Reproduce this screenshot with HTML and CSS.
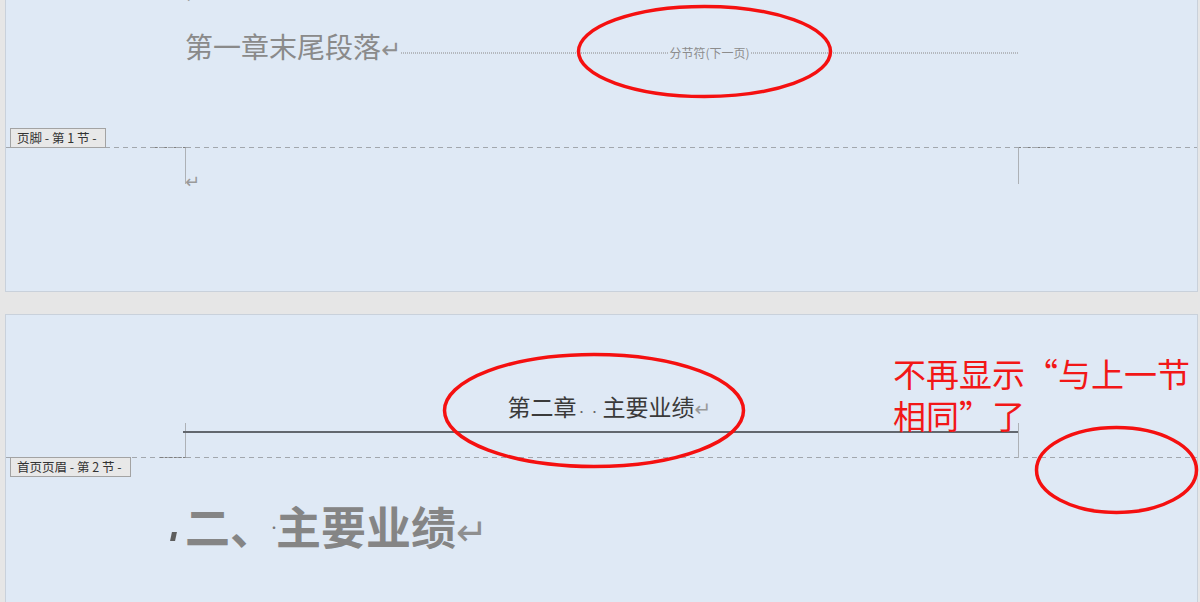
FILE: index.html
```html
<!DOCTYPE html>
<html lang="zh-CN">
<head>
<meta charset="utf-8">
<title>分节符 页眉页脚</title>
<link rel="stylesheet" href="styles.css">
</head>
<body>
<div class="canvas">
  <section class="page page-1">
    <div class="body-zone">
      <div class="prev-mark"><span>↵</span></div>
      <div class="para-row">
        <span class="p1-text">第一章末尾段落<span class="pm">↵</span></span>
        <div class="sbreak">
          <span class="dots"></span>
          <span class="sb-label">分节符(下一页)</span>
          <span class="dots"></span>
        </div>
      </div>
      <div class="hf-tab tab-foot">页脚 - 第 1 节 -</div>
    </div>
    <div class="foot-row">
      <div class="crop crop-l"></div>
      <div class="foot-content"><span class="pm foot-pm">↵</span></div>
      <div class="crop crop-r"></div>
    </div>
  </section>

  <section class="page page-2">
    <div class="head-zone">
      <div class="head-row">
        <div class="crop2 crop2-l"></div>
        <div class="head-para">第二章<span class="sp">·</span><span class="sp">·</span>主要业绩<span class="pm tail">↵</span></div>
        <div class="crop2 crop2-r"></div>
      </div>
      <div class="hf-tab tab-head">首页页眉 - 第 2 节 -</div>
    </div>
    <h1 class="heading"><span class="kwn"></span>二<span class="dun">、</span><span class="spdot">·</span>主要业绩<span class="pm hpm">↵</span></h1>
  </section>

  <div class="note">不再显示“与上一节<br>相同”了</div>

  <svg class="marks" width="1200" height="602" viewBox="0 0 1200 602">
    <ellipse cx="704.5" cy="51.5" rx="126" ry="45"/>
    <ellipse cx="594" cy="410.5" rx="149.5" ry="56"/>
    <ellipse cx="1116.5" cy="470" rx="80" ry="42.5"/>
  </svg>
</div>
</body>
</html>
```

FILE: styles.css
```css
html, body {
  margin: 0;
  padding: 0;
}
body {
  background: #e6e6e6;
  font-family: "Noto Sans CJK SC", "Noto Sans", sans-serif;
  overflow: hidden;
}
.canvas {
  position: relative;
  width: 1200px;
  height: 602px;
  overflow: hidden;
}

/* pages */
.page {
  margin-left: 5px;
  width: 1191px;
  background: #dfe9f5;
  border: 1px solid #c9d1db;
}
.page-1 {
  border-top: none;
  height: 291px;
}
.page-2 {
  margin-top: 22px;
  height: 300px;
}

/* page 1 body */
.body-zone {
  position: relative;
  height: 147px;
  padding-bottom: 1px;
  background: repeating-linear-gradient(90deg, #a2a7ad 0 5px, transparent 5px 9px) left bottom / 100% 1px no-repeat;
}
.prev-mark {
  height: 4px;
  overflow: hidden;
  padding-left: 179px;
}
.prev-mark span {
  display: block;
  font-family: "DejaVu Sans", sans-serif;
  font-size: 16px;
  line-height: 14px;
  margin-top: -9px;
  color: #9a9a9a;
}
.para-row {
  display: flex;
  align-items: center;
  width: 833px;
  margin-top: 24px;
  padding-left: 179px;
}
.p1-text {
  font-size: 28px;
  line-height: 36px;
  color: #8a8a8a;
  white-space: nowrap;
}
.pm {
  font-family: "DejaVu Sans", sans-serif;
  font-weight: 400;
}
.p1-text .pm {
  font-size: 24px;
  color: #8f8f8f;
}
.sbreak {
  flex: 1;
  display: flex;
  align-items: center;
  margin-top: 10px;
}
.dots {
  flex: 1;
  height: 2px;
  background: repeating-linear-gradient(90deg, #b4b8be 0 1px, transparent 1px 2px);
}
.sb-label {
  font-size: 12px;
  line-height: 14px;
  color: #8c8c8c;
  padding: 0 1px;
  white-space: nowrap;
}

/* header/footer tabs */
.hf-tab {
  position: absolute;
  left: 4px;
  font-size: 12.5px;
  line-height: 18px;
  padding: 0 8px 0 6px;
  background: #e8e8e8;
  border: 1px solid #a3a3a3;
  color: #333;
  white-space: nowrap;
}
.tab-foot {
  bottom: 0;
}
.tab-head {
  top: 100%;
  margin-top: -1px;
}

/* page 1 footer */
.foot-row {
  display: flex;
  margin-top: -1px;
  padding-left: 144px;
}
.crop {
  height: 36px;
  border-top: 1px dashed #808080;
}
.crop-l {
  width: 35px;
  border-right: 1px solid #adb1b6;
}
.crop-r {
  width: 36px;
  border-left: 1px solid #adb1b6;
}
.foot-content {
  width: 832px;
}
.foot-pm {
  display: block;
  margin-left: -1px;
  padding-top: 26px;
  font-size: 18px;
  line-height: 18px;
  color: #9a9a9a;
}

/* page 2 header */
.head-zone {
  position: relative;
  height: 142px;
  padding-bottom: 1px;
  display: flex;
  flex-direction: column;
  justify-content: flex-end;
  background: repeating-linear-gradient(90deg, #a2a7ad 0 5px, transparent 5px 9px) left bottom / 100% 1px no-repeat;
}
.head-row {
  display: flex;
  align-items: flex-end;
  padding-left: 154px;
  margin-bottom: -1px;
}
.crop2 {
  height: 34px;
}
.crop2-l {
  width: 25px;
  border-right: 1px solid #adb1b6;
  border-bottom: 1px dashed #7f7f7f;
}
.crop2-r {
  width: 36px;
  border-left: 1px solid #adb1b6;
  height: 35px;
}
.head-para {
  width: 836px;
  margin: 0 -1px 25px -3px;
  padding-bottom: 4px;
  border-bottom: 2px solid #62676e;
  text-align: center;
  font-size: 23px;
  line-height: 30px;
  color: #3a3a3a;
  white-space: nowrap;
}
.sp {
  display: inline-block;
  width: 13px;
  font-size: 10px;
  text-align: left;
  color: #666;
}
.tail {
  display: inline-block;
  width: 0;
  font-size: 20px;
  color: #999;
}

/* page 2 heading */
.heading {
  margin: 40px 0 0;
  padding-left: 179px;
  font-size: 45px;
  line-height: 56px;
  font-weight: 700;
  color: #858585;
  white-space: nowrap;
}
.kwn {
  display: inline-block;
  width: 5px;
  height: 9px;
  margin-left: -14px;
  margin-right: 9px;
  background: #5e5e5e;
  transform: skewX(-12deg);
  vertical-align: 4px;
}
.dun {
  display: inline-block;
  width: 38px;
}
.spdot {
  display: inline-block;
  width: 8px;
  font-size: 12px;
  line-height: 12px;
  font-weight: 400;
  color: #777;
  vertical-align: 12px;
}
.hpm {
  font-size: 38px;
  color: #8f8f8f;
}

/* annotation */
.note {
  position: absolute;
  left: 893px;
  top: 352px;
  font-size: 33px;
  line-height: 42px;
  color: #f21717;
  white-space: nowrap;
}
.marks {
  position: absolute;
  left: 0;
  top: 0;
  pointer-events: none;
}
.marks ellipse {
  fill: none;
  stroke: #f51010;
  stroke-width: 3.5;
}
```
